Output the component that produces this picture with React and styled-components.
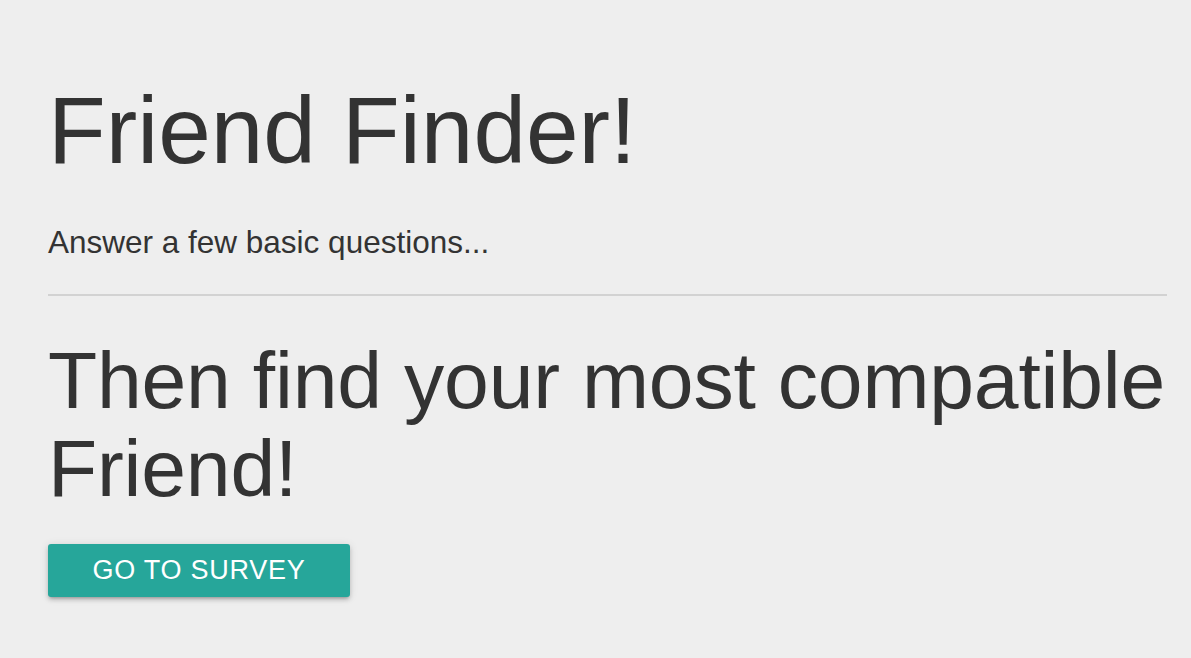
import React from "react";
import styled, { createGlobalStyle } from "styled-components";

const Global = createGlobalStyle`
  html, body { margin: 0; padding: 0; background: #eeeeee; }
  body { font-family: "Liberation Sans", Arial, sans-serif; color: #333333; }
`;

const Page = styled.main`
  padding: 78px 24px 40px 48px;
  min-height: 658px;
  box-sizing: border-box;
`;

const Title = styled.h1`
  margin: 0;
  font-size: 94.5px;
  line-height: 104.5px;
  font-weight: 400;
  color: #333333;
`;

const Lead = styled.p`
  margin: 37px 0 0;
  font-size: 31.5px;
  line-height: 44px;
  font-weight: 400;
`;

const Rule = styled.hr`
  margin: 30px 0 0;
  border: 0;
  border-top: 2px solid #d2d2d2;
`;

const Subtitle = styled.h2`
  margin: 40px 0 0;
  font-size: 80.5px;
  line-height: 88px;
  letter-spacing: -0.2px;
  font-weight: 400;
  color: #333333;
`;

const Button = styled.a`
  display: inline-flex;
  align-items: center;
  justify-content: center;
  margin-top: 32px;
  width: 302px;
  height: 53px;
  box-sizing: border-box;
  background: #26a69a;
  color: #ffffff;
  border-radius: 3px;
  font-size: 27px;
  letter-spacing: 0.75px;
  text-transform: uppercase;
  text-decoration: none;
  box-shadow: 0 3px 4px 0 rgba(0, 0, 0, 0.14), 0 1px 8px 0 rgba(0, 0, 0, 0.12),
    0 3px 3px -2px rgba(0, 0, 0, 0.2);
`;

export default function App() {
  return (
    <>
      <Global />
      <Page>
        <Title>Friend Finder!</Title>
        <Lead>Answer a few basic questions...</Lead>
        <Rule />
        <Subtitle>Then find your most compatible Friend!</Subtitle>
        <Button href="#survey">Go to Survey</Button>
      </Page>
    </>
  );
}
